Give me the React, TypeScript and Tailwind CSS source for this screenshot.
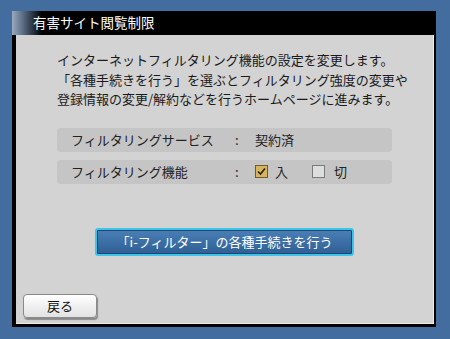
const font = "font-['Noto_Sans_CJK_JP','Noto_Sans',sans-serif]"

const Row = ({ label, children }: { label: string; children: React.ReactNode }) => (
    <div className="flex items-center h-[24px] rounded-[4px] bg-[#c5c5c5] pl-[14px]">
        <span className="w-[164px] text-[13px] text-[#222]">{label}</span>
        <span className="w-[20px] text-[13px] text-[#222]">:</span>
        <div className="flex items-center text-[13px] text-[#222]">{children}</div>
    </div>
)

const CheckBox = ({ checked }: { checked: boolean }) => (
    <span
        className={
            checked
                ? "flex items-center justify-center w-[13px] h-[13px] border border-[#6f5a2c] bg-[#d9b45e]"
                : "flex items-center justify-center w-[13px] h-[13px] border border-[#7a7a7a] bg-[#dedede]"
        }
    >
        {checked && (
            <svg width="11" height="11" viewBox="0 0 11 11">
                <path d="M2 5.5 L4.5 8 L9 2.5" fill="none" stroke="#2a2210" strokeWidth="1.6" />
            </svg>
        )}
    </span>
)

const App = () => {
    return (
        <div className={`w-[450px] h-[339px] bg-[#436c9f] pl-[12px] pt-[11px] ${font}`}>
            <div className="w-[424px] h-[316px] bg-black flex flex-col">
                <div className="h-[24px] flex items-center pl-[21px] bg-[linear-gradient(90deg,#9aaac0_0px,#4a5a70_14px,#000_30px)]">
                    <span className="text-white text-[13.5px] leading-none">有害サイト閲覧制限</span>
                </div>
                <div className="ml-[4px] mr-[2px] h-[289px] bg-[#d3d3d3] border-r border-b border-[#ececec] flex flex-col">
                    <div className="pl-[41px] pt-[15px] text-[13px] leading-[19.5px] text-[#1a1a1a]">
                        <p>インターネットフィルタリング機能の設定を変更します。</p>
                        <p>「各種手続きを行う」を選ぶとフィルタリング強度の変更や</p>
                        <p>登録情報の変更/解約などを行うホームページに進みます。</p>
                    </div>
                    <div className="ml-[41px] w-[335px] mt-[19px] flex flex-col gap-[8px]">
                        <Row label="フィルタリングサービス">
                            <span>契約済</span>
                        </Row>
                        <Row label="フィルタリング機能">
                            <CheckBox checked />
                            <span className="ml-[7px]">入</span>
                            <span className="ml-[24px]">
                                <CheckBox checked={false} />
                            </span>
                            <span className="ml-[9px]">切</span>
                        </Row>
                    </div>
                    <div className="flex justify-center mt-[44px]">
                        <button className="w-[259px] h-[28px] rounded-[3px] border-2 border-[#3cc4ea] bg-[linear-gradient(180deg,#4a7fb6,#2f5f94)] text-white text-[13px] shadow-[inset_0_0_0_1px_#1d4670]">
                            「i-フィルター」の各種手続きを行う
                        </button>
                    </div>
                    <div className="mt-auto mb-[5px] ml-[7px]">
                        <button className="w-[74px] h-[24px] rounded-[4px] border border-[#8a8a8a] bg-[linear-gradient(180deg,#ffffff,#e2e2e2)] text-[13px] text-[#111] shadow-[1px_2px_1px_#8a8a8a]">
                            戻る
                        </button>
                    </div>
                </div>
            </div>
        </div>
    )
}

export default App
